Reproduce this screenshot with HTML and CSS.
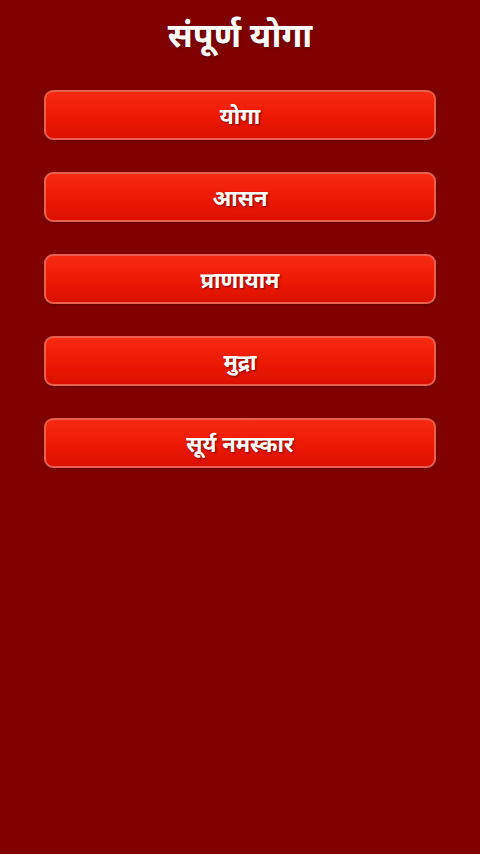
FILE: index.html
```html
<!DOCTYPE html>
<html lang="hi">
<head>
<meta charset="utf-8">
<link rel="stylesheet" href="styles.css">
</head>
<body>
<div class="screen">
  <h1 class="title">संपूर्ण योगा</h1>
  <div class="menu">
    <div class="btn">योगा</div>
    <div class="btn">आसन</div>
    <div class="btn">प्राणायाम</div>
    <div class="btn">मुद्रा</div>
    <div class="btn">सूर्य नमस्कार</div>
  </div>
</div>
</body>
</html>
```
FILE: styles.css
```css
html, body {
  margin: 0;
  padding: 0;
  background: #800000;
}
.screen {
  width: 480px;
  height: 854px;
  background: #800000;
  font-family: "Noto Sans", "Noto Sans Devanagari", "Lohit Devanagari", sans-serif;
}
.title {
  margin: 0;
  padding-top: 10px;
  height: 48px;
  text-align: center;
  color: #ffffff;
  font-size: 34px;
  font-weight: bold;
  line-height: 48px;
  text-shadow: 1px 1px 2px rgba(60,0,0,0.6);
}
.menu {
  display: flex;
  flex-direction: column;
  gap: 32px;
  padding: 32px 44px 0 44px;
}
.btn {
  height: 46px;
  border: 2px solid #e9604e;
  border-radius: 9px;
  background: linear-gradient(to bottom, #f72a12 0%, #ee1a04 50%, #dc1000 100%);
  color: #fff;
  font-size: 22px;
  font-weight: bold;
  display: flex;
  align-items: center;
  justify-content: center;
  text-shadow: 1px 1px 2px rgba(80,0,0,0.8);
  box-shadow: 0 1px 2px rgba(60,0,0,0.5);
}
```
